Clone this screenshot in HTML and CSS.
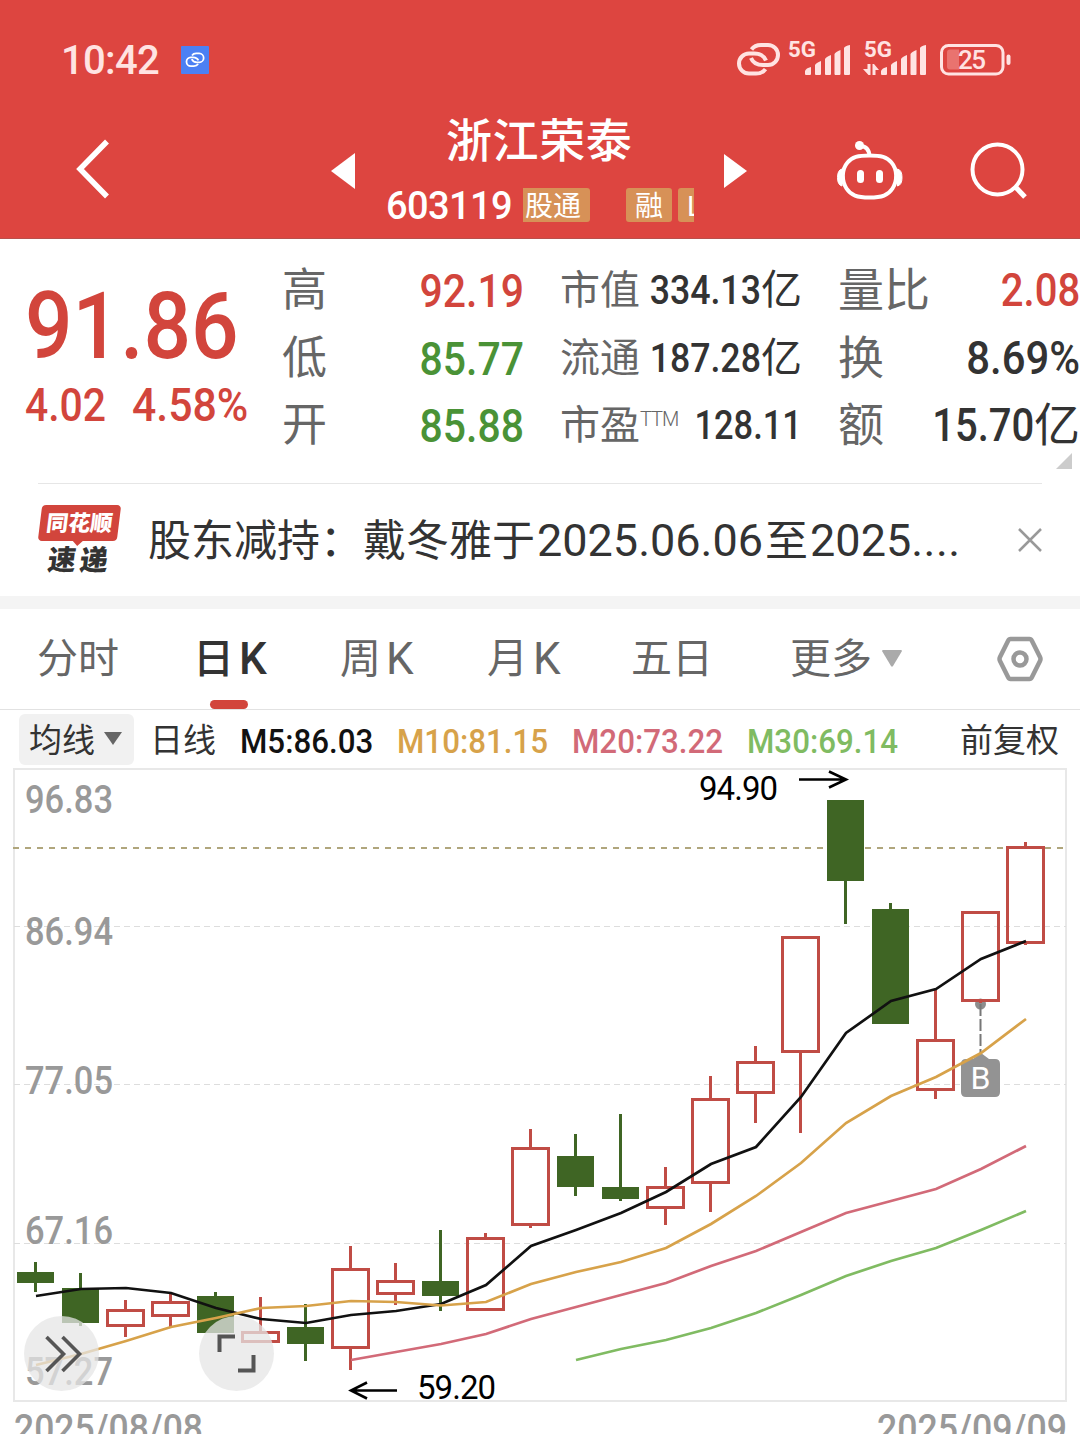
FILE: index.html
```
<!DOCTYPE html>
<html lang="zh-CN">
<head>
    <meta charset="UTF-8">
    <meta name="viewport" content="width=device-width, initial-scale=1.0">
    <title>浙江荣泰 603119</title>
    <link rel="stylesheet" href="styles.css">
</head>
<body>
    <header>
        <div class="status-bar">
            <span class="clock">10:42</span>
            <svg class="app-badge" viewBox="0 0 28 28">
                <rect width="28" height="28" rx="1" fill="#4c80f3"/>
                <g transform="translate(4.6 6.6) scale(.44)" fill="none" stroke="#fff" stroke-width="4">
                    <path d="M14.500 6.500C17 3 20 2 24 2H31a10 10 0 0 1 0 20H26c-6 0-10-2-12-7"/>
                    <path d="M14.500 6.500C17 3 20 2 24 2H31a10 10 0 0 1 0 20H26c-6 0-10-2-12-7" transform="rotate(180 21.500 16.300)"/>
                </g>
            </svg>
            <svg class="link-icon" viewBox="0 0 44 34" fill="none" stroke="#ffe3e2" stroke-width="4">
                <path d="M14.500 6.500C17 3 20 2 24 2H31a10 10 0 0 1 0 20H26c-6 0-10-2-12-7"/>
                <path d="M14.500 6.500C17 3 20 2 24 2H31a10 10 0 0 1 0 20H26c-6 0-10-2-12-7" transform="rotate(180 21.500 16.300)"/>
            </svg>
            <svg class="signal" viewBox="0 0 64 34" fill="#ffe3e2">
                <text x="0" y="14.500" textLength="28" lengthAdjust="spacingAndGlyphs">5G</text>
                <path d="M17 32v-3q1-3 6-4v7q0 1-1 1h-4q-1 0-1-1zM27 32V23q1-2 6-4v13q0 1-1 1h-4q-1 0-1-1zM37 32V17q1-2 6-4v19q0 1-1 1h-4q-1 0-1-1zM46.500 32V12q1-2 6-4v24q0 1-1 1h-4q-1 0-1-1zM56 32V6q1-2 6-3v29q0 1-1 1h-4q-1 0-1-1z"/>
            </svg>
            <svg class="signal" viewBox="0 0 64 34" fill="#ffe3e2">
                <text x="0" y="14.500" textLength="28" lengthAdjust="spacingAndGlyphs">5G</text>
                <path d="M3.500 22h3v11h-2l-5.500-6h4.500zM8.500 33V22h1.500l5 6h-3.500v5z"/>
                <path d="M17 32v-3q1-3 6-4v7q0 1-1 1h-4q-1 0-1-1zM27 32V23q1-2 6-4v13q0 1-1 1h-4q-1 0-1-1zM37 32V17q1-2 6-4v19q0 1-1 1h-4q-1 0-1-1zM46.500 32V12q1-2 6-4v24q0 1-1 1h-4q-1 0-1-1zM56 32V6q1-2 6-3v29q0 1-1 1h-4q-1 0-1-1z"/>
            </svg>
            <svg class="battery" viewBox="0 0 72 32">
                <rect x="1.500" y="1.500" width="61.500" height="28.500" rx="7" fill="none" stroke="#ffe3e2" stroke-width="3"/>
                <path d="M10 5.500h9v20h-9q-3 0-3-3v-14q0-3 3-3z" fill="#e9736f"/>
                <rect x="66.500" y="10.500" width="4" height="10.500" rx="2" fill="#ffe3e2"/>
                <text x="18" y="25" textLength="28">25</text>
            </svg>
        </div>
        <nav>
            <svg class="back" viewBox="0 0 36 62"><path d="M32 3.500 5 31l27 27.500" fill="none" stroke="#fff" stroke-width="5.500"/></svg>
            <svg class="prev" viewBox="0 0 24 36"><path d="M24 0v36L0 18z" fill="#fff"/></svg>
            <div class="stock">
                <h1>浙江荣泰</h1>
                <div class="stock-sub">
                    <span class="code">603119</span>
                    <span class="tag tag-open">股通</span>
                    <span class="tag tag-rong">融</span>
                    <span class="tag tag-cut">L</span>
                </div>
            </div>
            <svg class="next" viewBox="0 0 24 36"><path d="M0 1v34l23-17z" fill="#fff"/></svg>
            <svg class="robot" viewBox="0 0 66 62">
                <path d="M32.500 15.500C44 15.500 50 17 54.500 22.500c6 7 6 18.500 1 26C51 55.500 45 57.500 32.500 57.500S14 55.500 9.500 48.500c-5-7.500-5-19 1-26C15 17 21 15.500 32.500 15.500z" fill="none" stroke="#fff" stroke-width="4"/>
                <path d="M23 6c6 0 9 3 9.500 10" fill="none" stroke="#fff" stroke-width="4"/>
                <circle cx="22.500" cy="5.500" r="4.500" fill="#fff"/>
                <path d="M5 29v17q-4.500-1-4.500-8.500T5 29zM60.500 29v17q4.500-1 4.500-8.500T60.500 29z" fill="#fff" stroke="#fff"/>
                <rect x="20" y="30" width="7" height="13" rx="3.500" fill="#fff"/>
                <rect x="39" y="30" width="7" height="13" rx="3.500" fill="#fff"/>
            </svg>
            <svg class="search" viewBox="0 0 58 58" fill="none" stroke="#fff" stroke-width="4">
                <circle cx="27.500" cy="27.500" r="25"/>
                <path d="M45.500 45 55 55" stroke-width="5"/>
            </svg>
        </nav>
    </header>

    <section class="quote">
        <div class="price up">
            <div class="last"><span class="num">91.86</span></div>
            <div class="change"><span class="num">4.02</span><span class="num percent">4.58%</span></div>
        </div>
        <dl class="col-a">
            <dt>高</dt><dd class="up"><span class="num">92.19</span></dd>
            <dt>低</dt><dd class="down"><span class="num">85.77</span></dd>
            <dt>开</dt><dd class="down"><span class="num">85.88</span></dd>
        </dl>
        <dl class="col-b">
            <dt>市值</dt><dd><span class="num">334.13</span>亿</dd>
            <dt>流通</dt><dd><span class="num">187.28</span>亿</dd>
            <dt class="ttm">市盈<sup>TTM</sup></dt><dd><span class="num pe">128.11</span></dd>
        </dl>
        <dl class="col-c">
            <dt>量比</dt><dd class="up"><span class="num">2.08</span></dd>
            <dt>换</dt><dd><span class="num percent">8.69%</span></dd>
            <dt>额</dt><dd><span class="num">15.70</span>亿</dd>
        </dl>
        <i class="corner"></i>
    </section>

    <section class="news">
        <div class="news-logo">
            <b>同花顺</b>
            <em>速递</em>
        </div>
        <p>股东减持：戴冬雅于<span class="date">2025.06.06</span>至<span class="date">2025</span><span class="dots">....</span></p>
        <svg class="close" viewBox="0 0 24 24"><path d="M1 1l22 22M23 1L1 23" stroke="#999" stroke-width="2.500"/></svg>
    </section>

    <div class="tabs">
        <span>分时</span>
        <span class="active">日<i>K</i></span>
        <span>周<i>K</i></span>
        <span>月<i>K</i></span>
        <span>五日</span>
        <span>更多<svg class="caret" viewBox="0 0 20 17"><path d="M1 0h18q1.500 0 .7 1.500L11 16q-1 1.500-2 0L.3 1.500Q-.5 0 1 0z" fill="#aaa"/></svg></span>
        <svg class="settings" viewBox="0 0 46 46" fill="none" stroke="#999" stroke-width="4.500">
            <path d="M13.500 3h19q1.500 0 2.500 2l8 16q1 2 0 4l-8 16q-1 2-2.500 2h-19q-1.500 0-2.500-2L3 25q-1-2 0-4l8-16q1-2 2.500-2z"/>
            <circle cx="23" cy="23" r="6.500"/>
        </svg>
    </div>

    <div class="ma-bar">
        <span class="ma-select"><span>均线</span><svg viewBox="0 0 18 13"><path d="M0 0h18L9 13z" fill="#666"/></svg></span>
        <span class="period">日线</span>
        <span class="ma ma5"><span class="num">M5:86.03</span></span>
        <span class="ma ma10"><span class="num">M10:81.15</span></span>
        <span class="ma ma20"><span class="num">M20:73.22</span></span>
        <span class="ma ma30"><span class="num">M30:69.14</span></span>
        <span class="adjust">前复权</span>
    </div>

    <svg id="chart" class="chart" viewBox="0 768 1080 666"></svg>

    <script>
        // [high, top, bottom, low, isUp]
        const candles = [
            [1262, 1272, 1283, 1292, 0],
            [1273, 1288, 1323, 1326, 0],
            [1300, 1309, 1327, 1337, 1],
            [1294, 1301, 1317, 1327, 1],
            [1292, 1296, 1333, 1333, 0],
            [1297, 1331, 1343, 1343, 1],
            [1304, 1327, 1344, 1361, 0],
            [1246, 1268, 1349, 1370, 1],
            [1263, 1280, 1295, 1305, 1],
            [1230, 1281, 1296, 1311, 0],
            [1233, 1237, 1311, 1311, 1],
            [1129, 1147, 1226, 1228, 1],
            [1134, 1156, 1187, 1196, 0],
            [1114, 1187, 1199, 1201, 0],
            [1167, 1186, 1209, 1225, 1],
            [1076, 1098, 1184, 1212, 1],
            [1046, 1061, 1094, 1123, 1],
            [936, 936, 1053, 1133, 1],
            [800, 800, 881, 924, 0],
            [903, 909, 1024, 1024, 0],
            [990, 1039, 1091, 1099, 1],
            [911, 911, 1002, 1003, 1],
            [842, 846, 944, 945, 1]
        ];

        // moving averages, each one ends on the last candle
        const averages = [
            { color: '#111', y: [1296, 1289, 1288, 1293, 1308, 1319, 1323, 1315, 1311, 1304, 1285, 1246, 1230, 1213, 1192, 1164, 1147, 1097, 1033, 1001, 989, 959, 941] },
            { color: '#d7a24a', y: [1365, 1354, 1341, 1327, 1318, 1308, 1306, 1301, 1302, 1305.5, 1302, 1284, 1272, 1262, 1248, 1224, 1196, 1163, 1123, 1096, 1077, 1053, 1019] },
            { color: '#d26a78', y: [1360, 1352, 1344, 1334, 1319, 1307, 1295, 1283, 1266, 1251, 1232, 1213, 1201, 1189, 1169, 1146] },
            { color: '#80bb62', y: [1360, 1349, 1340, 1328, 1313, 1295, 1276, 1261, 1248, 1230, 1211] }
        ];

        const centerX = i => 35.5 + i * 45;
        let svg = '';

        // frame and grid
        svg += '<rect x="14" y="769" width="1052" height="632" fill="none" stroke="#e8e8e8" stroke-width="2"/>';
        [926.5, 1084.5, 1243.5].forEach(y => {
            svg += `<path d="M14 ${y}H1066" stroke="#ddd" stroke-dasharray="6 4"/>`;
        });
        svg += '<path d="M13 848H1066" stroke="#b0a67c" stroke-width="2" stroke-dasharray="6 6"/>';

        // price axis
        [['96.83', 813], ['86.94', 945], ['77.05', 1094], ['67.16', 1243.5], ['57.27', 1384.5]].forEach(([label, y]) => {
            svg += `<text class="axis" x="25" y="${y}" textLength="88" lengthAdjust="spacingAndGlyphs">${label}</text>`;
        });
        svg += '<text class="axis" x="14" y="1442" textLength="189" lengthAdjust="spacingAndGlyphs">2025/08/08</text>';
        svg += '<text class="axis" x="877" y="1442" textLength="190" lengthAdjust="spacingAndGlyphs">2025/09/09</text>';

        // buy marker anchor
        svg += '<circle cx="980.5" cy="1004" r="5.500" fill="#8d8d8d"/>';

        candles.forEach(([high, top, bottom, low, up], i) => {
            const x = centerX(i);
            if (up) {
                svg += `<path d="M${x} ${high}V${top}M${x} ${bottom}V${low}" stroke="#c04c45" stroke-width="3"/>`;
                svg += `<rect x="${x - 18}" y="${top + 1.5}" width="36" height="${bottom - top - 3}" fill="none" stroke="#c04c45" stroke-width="3"/>`;
            } else {
                svg += `<path d="M${x} ${high}V${low}" stroke="#3f6524" stroke-width="3"/>`;
                svg += `<rect x="${x - 18.5}" y="${top}" width="37" height="${bottom - top}" fill="#3f6524"/>`;
            }
        });

        svg += '<path d="M980.500 1004V1054" stroke="#777" stroke-width="2" stroke-dasharray="12 3"/>';
        svg += '<path d="M966 1059h7l8-6 8 6h6q5 0 5 5v28q0 5-5 5h-29q-5 0-5-5v-28q0-5 5-5z" fill="#939393"/>';

        averages.forEach(({ color, y }) => {
            const start = candles.length - y.length;
            const points = y.map((v, i) => `${centerX(start + i) + 0.5},${v}`).join(' ');
            svg += `<polyline points="${points}" fill="none" stroke="${color}" stroke-width="2.700"/>`;
        });
        svg += '<text class="buy" x="980.5" y="1089" text-anchor="middle">B</text>';

        // highest and lowest price
        svg += '<text class="extreme" x="699" y="800" textLength="79">94.90</text>';
        svg += '<path d="M799 779.500H845M829 771.500l17 8-17 8" fill="none" stroke="#000" stroke-width="2.600"/>';
        svg += '<text class="extreme" x="417" y="1399" textLength="79">59.20</text>';
        svg += '<path d="M397 1390.500H351M367 1382.500l-16 8 16 8" fill="none" stroke="#000" stroke-width="2.600"/>';

        // floating buttons
        svg += '<circle cx="61.500" cy="1353.500" r="37.500" fill="#e6e6e6" fill-opacity=".75"/>';
        svg += '<path d="M46.500 1337l17 17-17 17M62.500 1337l17 17-17 17" fill="none" stroke="#555" stroke-width="3.600"/>';
        svg += '<circle cx="236.500" cy="1353.500" r="37.500" fill="#e6e6e6" fill-opacity=".75"/>';
        svg += '<path d="M219.500 1352v-15.500h15.500M253.500 1355v15.500h-15.500" fill="none" stroke="#555" stroke-width="4"/>';

        document.getElementById('chart').innerHTML = svg;
    </script>
</body>
</html>
```
FILE: styles.css
```
* {
    margin: 0;
    padding: 0;
    box-sizing: border-box;
}

body {
    width: 1080px;
    height: 1434px;
    overflow: hidden;
    background-color: #fff;
    color: #333;
    font-family: Roboto, 'Noto Sans CJK SC', sans-serif;
}

svg {
    display: block;
    flex: none;
    overflow: visible;
}

i, em {
    font-style: normal;
}

.num {
    display: inline-block;
    font-weight: 500;
    white-space: nowrap;
    transform-origin: left;
}

.up {
    color: #d2453c;
}

.down {
    color: #4a9236;
}

/* Header */
header {
    height: 239px;
    background-color: #dd4540;
    border-bottom: 1px solid #b9504c;
    color: #fff;
}

.status-bar {
    display: flex;
    align-items: center;
    height: 103px;
    padding: 17px 0 0 61px;
}

.clock {
    width: 120px;
    padding-top: 2px;
    font-size: 40px;
    font-weight: 500;
    line-height: 40px;
    letter-spacing: -.7px;
    color: #ffe3e2;
}

.app-badge {
    width: 28px;
    height: 28px;
}

.link-icon {
    width: 44px;
    height: 34px;
    margin-left: 528px;
}

.signal {
    width: 64px;
    height: 34px;
    margin: -2px 0 0 7px;
}

.signal + .signal {
    margin-left: 12px;
}

.signal text {
    font-size: 22px;
    font-weight: 700;
}

.battery {
    width: 72px;
    height: 32px;
    margin-left: 12px;
}

.battery text {
    font-size: 26px;
    font-weight: 500;
    fill: #ffe3e2;
}

nav {
    display: flex;
    align-items: center;
    height: 136px;
}

.back {
    width: 36px;
    height: 62px;
    margin: -4px 0 0 75px;
}

.prev {
    width: 24px;
    height: 36px;
    margin-left: 220px;
}

.stock {
    width: 339px;
    height: 136px;
    margin-left: 31px;
}

.stock h1 {
    height: 76px;
    margin-left: 60px;
    font-size: 46px;
    font-weight: 500;
    line-height: 76px;
    letter-spacing: .6px;
}

.stock-sub {
    display: flex;
    height: 50px;
    padding-top: 9px;
}

.code {
    width: 137px;
    font-size: 38px;
    font-weight: 500;
    line-height: 37px;
    letter-spacing: -.6px;
}

.tag {
    height: 34px;
    background-color: #d79157;
    border-radius: 3px;
    font-size: 28px;
    line-height: 37px;
    text-align: center;
    overflow: hidden;
}

.tag-open {
    width: 67px;
    padding-right: 7px;
    border-radius: 0 3px 3px 0;
}

.tag-rong {
    width: 46px;
    margin-left: 36px;
}

.tag-cut {
    width: 16px;
    margin-left: 6px;
    padding-left: 9px;
    border-radius: 3px 0 0 3px;
    text-align: left;
}

.next {
    width: 24px;
    height: 36px;
    margin-left: -1px;
}

.robot {
    width: 66px;
    height: 62px;
    margin-left: 89px;
}

.search {
    width: 58px;
    height: 58px;
    margin-left: 67px;
}

/* Quote */
.quote {
    position: relative;
    display: flex;
    height: 244px;
    padding-top: 18px;
}

.price {
    width: 283px;
    padding-left: 25px;
}

.last {
    height: 113px;
    padding-top: 15px;
    font-size: 93px;
    line-height: 110px;
}

.last .num {
    transform: scaleX(.9);
}

.change {
    display: flex;
    font-size: 47px;
    line-height: 70px;
}

.change .num {
    width: 107px;
    transform: scaleX(.87);
}

.change .percent {
    transform: scaleX(.91);
}

.quote dl {
    display: grid;
    grid-template-columns: auto minmax(0, 1fr);
    grid-auto-rows: 67.5px;
    line-height: 67.5px;
}

.quote dt {
    color: #666;
    font-size: 45px;
    white-space: nowrap;
}

.quote dd {
    display: flex;
    justify-content: flex-end;
    font-size: 47px;
    white-space: nowrap;
}

.quote dd .num {
    transform: scaleX(.87);
    transform-origin: right;
}

.col-a {
    width: 242px;
    margin-left: -1px;
}

.col-b {
    width: 242px;
    margin-left: 36px;
}

.quote .col-b dt {
    font-size: 40px;
}

.quote .col-b dd {
    font-size: 41px;
}

.quote .ttm {
    font-size: 38px;
}

.ttm sup {
    font-size: 20px;
    font-weight: 300;
    line-height: 0;
    letter-spacing: -1px;
    vertical-align: 13px;
}

.quote .col-b .pe {
    transform: scaleX(.84);
}

.col-c {
    width: 242px;
    margin-left: 36px;
}

.quote .col-c dt {
    font-size: 46px;
}

.quote .col-c dd {
    font-size: 46px;
}

.quote .col-c .percent {
    transform: scaleX(.91);
}

.corner {
    position: absolute;
    right: 8px;
    bottom: 14px;
    border: 8px solid #ccc;
    border-top-color: transparent;
    border-left-color: transparent;
}

/* News */
.news {
    display: flex;
    height: 113px;
    margin: 0 38px;
    border-top: 1px solid #e6e6e6;
}

.news-logo {
    width: 82px;
    margin: 21px 0 0 2px;
}

.news-logo b {
    display: block;
    width: 79px;
    height: 36px;
    background-color: #d2453c;
    border-radius: 4px;
    color: #fff;
    font-size: 22px;
    font-weight: 900;
    line-height: 38px;
    text-align: center;
    transform: skewX(-7deg);
}

.news-logo b::after {
    content: '';
    display: block;
    width: 0;
    margin: -3px auto 0;
    border: 6px solid transparent;
    border-top-color: #d2453c;
}

.news-logo em {
    display: block;
    padding-left: 8px;
    font-size: 28px;
    font-weight: 900;
    line-height: 39px;
    letter-spacing: 4px;
    transform: skewX(-7deg);
}

.news p {
    width: 842px;
    padding: 2px 0 0 26px;
    font-size: 43px;
    line-height: 110px;
    white-space: nowrap;
}

.news p span {
    display: inline-block;
    padding-left: 2px;
    font-size: 45px;
}

.news .date + .dots {
    padding-left: 0;
    letter-spacing: .5px;
}

.news .date {
    margin-right: 2px;
}

.news .date ~ .date {
    margin: 0;
}

.close {
    width: 24px;
    height: 24px;
    margin: 44px 0 0 54px;
}

/* Tabs */
.tabs {
    display: grid;
    grid-template-columns: 158px 145px 147px 144px 159px 206px 46px;
    grid-template-rows: 100px;
    height: 114px;
    padding-left: 38px;
    border-top: 13px solid #f4f4f4;
    border-bottom: 1px solid #e2e2e2;
    color: #666;
    font-size: 41px;
    line-height: 101px;
}

.tabs span {
    display: flex;
    align-items: center;
    margin-left: -1px;
}

.tabs i {
    margin-left: 5px;
    font-size: 44px;
}

.tabs .active {
    position: relative;
    margin-left: -3px;
    color: #333;
    font-weight: 500;
}

.tabs .active::after {
    content: '';
    position: absolute;
    left: 17px;
    bottom: 0;
    width: 38px;
    height: 9px;
    background-color: #d2453c;
    border-radius: 5px;
}

.caret {
    width: 20px;
    height: 17px;
    margin: -2px 0 0 10px;
}

.settings {
    width: 46px;
    height: 46px;
    margin-top: 27px;
}

/* Moving averages */
.ma-bar {
    display: grid;
    grid-template-columns: 131px 90px 157px 175px 175px 213px 110px;
    align-items: center;
    height: 58px;
    padding-left: 19px;
    font-size: 33px;
    line-height: 52px;
}

.ma-select {
    display: flex;
    align-items: center;
    width: 115px;
    height: 51px;
    padding-left: 10px;
    background-color: #f1f1f1;
    border-radius: 6px;
}

.ma-select span {
    padding-top: 3px;
}

.ma-select svg {
    width: 18px;
    height: 13px;
    margin: -2px 0 0 9px;
}

.period,
.adjust,
.ma {
    padding-top: 3px;
}

.ma {
    font-size: 34px;
}

.ma .num {
    transform: scaleX(.92);
}

.ma5 {
    color: #111;
}

.ma10 {
    color: #d7a24a;
}

.ma20 {
    color: #d26a78;
}

.ma30 {
    color: #80bb62;
}

/* Chart */
.chart {
    width: 1080px;
    height: 666px;
}

.axis {
    font-size: 38px;
    font-weight: 500;
    fill: #999;
}

.extreme {
    font-size: 33px;
    fill: #000;
}

.buy {
    font-size: 32px;
    fill: #fff;
}
```
